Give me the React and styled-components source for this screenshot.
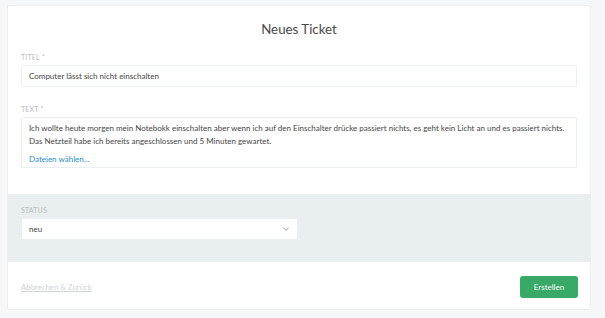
import React from 'react';
import styled, { createGlobalStyle } from 'styled-components';

const GlobalStyle = createGlobalStyle`
  html, body {
    margin: 0;
    padding: 0;
    background: #f6f7f8;
    font-family: Lato, "Open Sans", sans-serif;
    color: #585858;
  }
`;

// page frame around the card
const Page = styled.div`
  padding: 5px 14px 9px 7px;
`;

const Card = styled.div`
  background: #fff;
  border: 1px solid #eceeef;
  border-radius: 2px;
  overflow: hidden;
`;

const Title = styled.h1`
  margin: 0;
  padding-top: 13px;
  font-size: 13.3px;
  line-height: 20px;
  font-weight: 400;
  text-align: center;
  color: #484848;
`;

const Section = styled.div`
  padding: ${p => p.$pad || '13px 13px 26px'};
  background: ${p => (p.$grey ? '#e9eef0' : '#fff')};
`;

const Field = styled.div`
  & + & {
    margin-top: 17px;
  }
`;

const Label = styled.div`
  font-size: 7px;
  line-height: 10px;
  letter-spacing: 0.2px;
  text-transform: uppercase;
  color: #b9bdbf;
  margin-bottom: 3px;
`;

const Input = styled.div`
  background: #fff;
  border: 1px solid #eceff0;
  border-radius: 2px;
  height: 20px;
  padding: 0 7px;
  font-size: 8px;
  line-height: 20px;
  color: #464646;
  width: ${p => p.$width || 'auto'};
  box-sizing: content-box;
  display: flex;
  align-items: center;
  justify-content: space-between;
`;

const TextArea = styled.div`
  background: #fff;
  border: 1px solid #eceff0;
  border-radius: 2px;
  padding: 4px 7px 1px;
  font-size: 8px;
  line-height: 13px;
  color: #464646;
  white-space: nowrap;
`;

const FileLink = styled.div`
  margin-top: 5px;
  color: #2a8fca;
`;

const Footer = styled.div`
  display: flex;
  align-items: center;
  justify-content: space-between;
  padding: 14px 12px 11px 13px;
`;

const CancelLink = styled.a`
  font-size: 7.8px;
  color: #d0d4d6;
  text-decoration: underline;
`;

const Button = styled.button`
  height: 22px;
  width: 58px;
  border: none;
  border-radius: 3px;
  background: #38a967;
  color: #fff;
  font-family: inherit;
  font-size: 8px;
  padding: 0;
`;

const Chevron = () => (
  <svg width="8" height="8" viewBox="0 0 8 8">
    <path d="M1.5 2.8 L4 5.2 L6.5 2.8" fill="none" stroke="#9aa2a6" strokeWidth="1" />
  </svg>
);

export default function App() {
  return (
    <Page>
      <GlobalStyle />
      <Card>
        <Title>Neues Ticket</Title>
        <Section>
          <Field>
            <Label>Titel *</Label>
            <Input>Computer lässt sich nicht einschalten</Input>
          </Field>
          <Field>
            <Label>Text *</Label>
            <TextArea>
              Ich wollte heute morgen mein Notebokk einschalten aber wenn ich auf den Einschalter drücke passiert nichts, es geht kein Licht an und es passiert nichts.
              <br />
              Das Netzteil habe ich bereits angeschlossen und 5 Minuten gewartet.
              <FileLink>Dateien wählen...</FileLink>
            </TextArea>
          </Field>
        </Section>
        <Section $grey $pad="11px 13px 22px">
          <Label>Status</Label>
          <Input $width="261px">
            neu
            <Chevron />
          </Input>
        </Section>
        <Footer>
          <CancelLink>Abbrechen &amp; Zurück</CancelLink>
          <Button>Erstellen</Button>
        </Footer>
      </Card>
    </Page>
  );
}
